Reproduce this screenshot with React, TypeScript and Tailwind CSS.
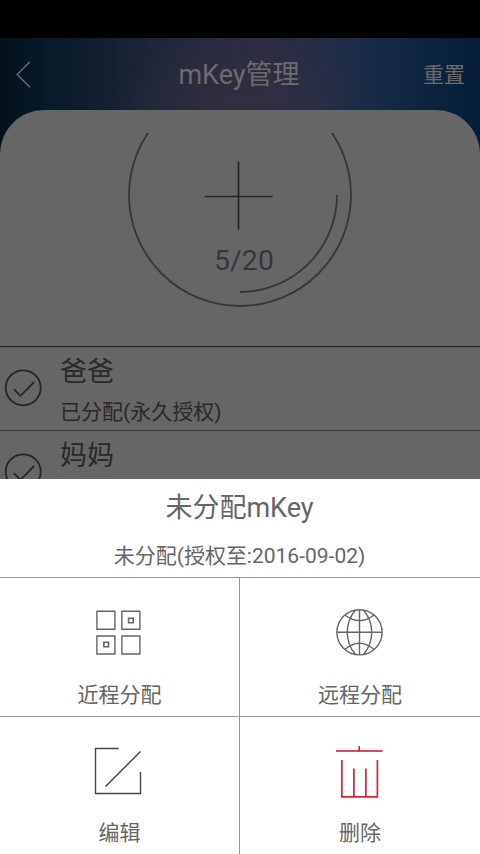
import React from "react";

const members = [
  { name: "爸爸", status: "已分配(永久授权)" },
  { name: "妈妈", status: "" },
];

const BackIcon = () => (
  <svg width="16" height="28" viewBox="0 0 16 28" fill="none" stroke="#707274" strokeWidth="1.3">
    <path d="M14.700 1L2.200 13.500L14.700 26" />
  </svg>
);

const CheckIcon = () => (
  <svg width="38" height="38" viewBox="0 0 38 38" fill="none" stroke="#262626" strokeWidth="1.8">
    <circle cx="19.200" cy="18.800" r="17.500" />
    <path d="M9.800 20.200L16.500 26.800L30.300 12.800" />
  </svg>
);

const NearIcon = () => (
  <svg width="48" height="48" viewBox="0 0 48 48" fill="none" stroke="#666" strokeWidth="1.4">
    <path d="M2.900 3.300h18v18h-18zM27.900 3.300h18v18h-18zM2.900 28h18v18h-18zM27.900 28h18v18h-18z" />
    <path d="M34.600 10.200h4.600v4.600h-4.600zM9.900 34.200h4.600v4.600H9.900z" strokeWidth="1.6" />
  </svg>
);

const GlobeIcon = () => (
  <svg width="48" height="48" viewBox="0 0 48 48" fill="none" stroke="#666" strokeWidth="1.4">
    <circle cx="24.500" cy="24.300" r="22.600" />
    <path d="M24.500 1.700v45.200M1.900 24.300h45.200" />
    <path d="M20.500 2C9.500 15 9.500 33.500 20.500 46.500M28.500 2C39.500 15 39.500 33.500 28.500 46.500" />
    <path d="M10.200 7.300Q24.500 18 38.800 7.300M10.200 41.300Q24.500 29.300 38.800 41.300" />
  </svg>
);

const EditIcon = () => (
  <svg width="48" height="48" viewBox="0 0 48 48" fill="none" stroke="#444" strokeWidth="1.4">
    <path d="M24.600 1.500H1.500v45h45V25" />
    <path d="M11.500 39.500L46.500 4.500" />
  </svg>
);

const DeleteIcon = () => (
  <svg width="48" height="53" viewBox="0 0 48 53" fill="none" stroke="#e0202f" strokeWidth="1.7">
    <path d="M1 6h46.500M24.200 1v5" stroke="#da0b1d" strokeWidth="1.400" />
    <path d="M6.900 15v36.800h35.500V15M18.900 23.500v28M30.900 23.500v28" />
  </svg>
);

const actions = [
  { label: "近程分配", icon: <NearIcon />, className: "h-[139px] border-r border-b pt-[30px]", iconClass: "mr-[4px]" },
  { label: "远程分配", icon: <GlobeIcon />, className: "h-[139px] border-b pt-[30px]", iconClass: "mr-[2px]" },
  { label: "编辑", icon: <EditIcon />, className: "h-[137px] border-r pt-[30px]", iconClass: "mr-[4px]" },
  { label: "删除", icon: <DeleteIcon />, className: "h-[137px] pt-[28px]", iconClass: "mr-[2px]" },
];

const App = () => {
  return (
    <div className="relative flex h-[854px] w-[480px] flex-col overflow-hidden bg-black pt-[38px] font-[Roboto,'Noto_Sans_CJK_SC',sans-serif]">
      <div className="flex flex-1 flex-col bg-[linear-gradient(90deg,#03111b_0px,#07192a_45px,#121f30_100px,#1e2638_155px,#282a40_210px,#2b2c43_270px,#252d46_320px,#182b46_370px,#0e2540_420px,#061d38_480px)]">
        {/* Title bar */}
        <header className="grid h-[72px] shrink-0 grid-cols-[1fr_auto_1fr] items-center bg-[radial-gradient(ellipse_130px_80px_at_240px_72px,#38303f99,#38303f00)] px-[15px] pt-[2px] text-[#6b6b6b]">
          <button type="button" className="justify-self-start">
            <BackIcon />
          </button>
          <h1 className="relative right-[1px] text-[27px] leading-[36px]">mKey管理</h1>
          <button type="button" className="justify-self-end text-[21px] leading-[30px]">
            重置
          </button>
        </header>

        {/* Key list */}
        <main className="flex flex-1 flex-col rounded-t-[44px] bg-[#666]">
          <div className="flex h-[236px] shrink-0 justify-center pt-[23px]">
            <svg width="240" height="180" viewBox="120 133 240 180" fill="none" stroke="#36363c" strokeWidth="1.8">
              <circle cx="240" cy="195" r="111" />
              <path d="M337 195A97 97 0 0 1 240 292" />
              <path d="M204.500 196.500h68M238.500 161.500v68" stroke="#252525" strokeWidth="1.700" />
              <text x="244" y="270" textAnchor="middle" fontSize="28.500" fill="#36363c" stroke="none">
                5/20
              </text>
            </svg>
          </div>
          {members.map((member, index) => (
            <div
              key={member.name}
              className={`flex h-[84px] shrink-0 border-t pl-1 text-[#292929] ${index === 0 ? "border-[#202020]" : "border-[#3b3b3b]"}`}
            >
              <div className="w-[56px] shrink-0 pt-[22px]">
                <CheckIcon />
              </div>
              <div className="pt-[6px]">
                <p className="text-[27px] leading-[38px]">{member.name}</p>
                {member.status && <p className="mt-[6px] text-[21px] leading-[30px]">{member.status}</p>}
              </div>
            </div>
          ))}
        </main>
      </div>

      {/* Action sheet */}
      <section className="absolute inset-x-0 bottom-0 bg-white text-[#666]">
        <div className="h-[98px] pt-[10px] pr-[1px] text-center">
          <h2 className="text-[27px] leading-[38px]">未分配mKey</h2>
          <p className="mt-[14px] text-[21px] leading-[30px]">未分配(授权至:2016-09-02)</p>
        </div>
        <div className="grid grid-cols-[240px_240px] border-t border-[#969696]">
          {actions.map((action) => (
            <button
              type="button"
              key={action.label}
              className={`flex flex-col items-center justify-between border-[#969696] pb-[6px] ${action.className}`}
            >
              <span className={action.iconClass}>{action.icon}</span>
              <span className="text-[21px] leading-[30px]">{action.label}</span>
            </button>
          ))}
        </div>
      </section>
    </div>
  );
};

export default App;
